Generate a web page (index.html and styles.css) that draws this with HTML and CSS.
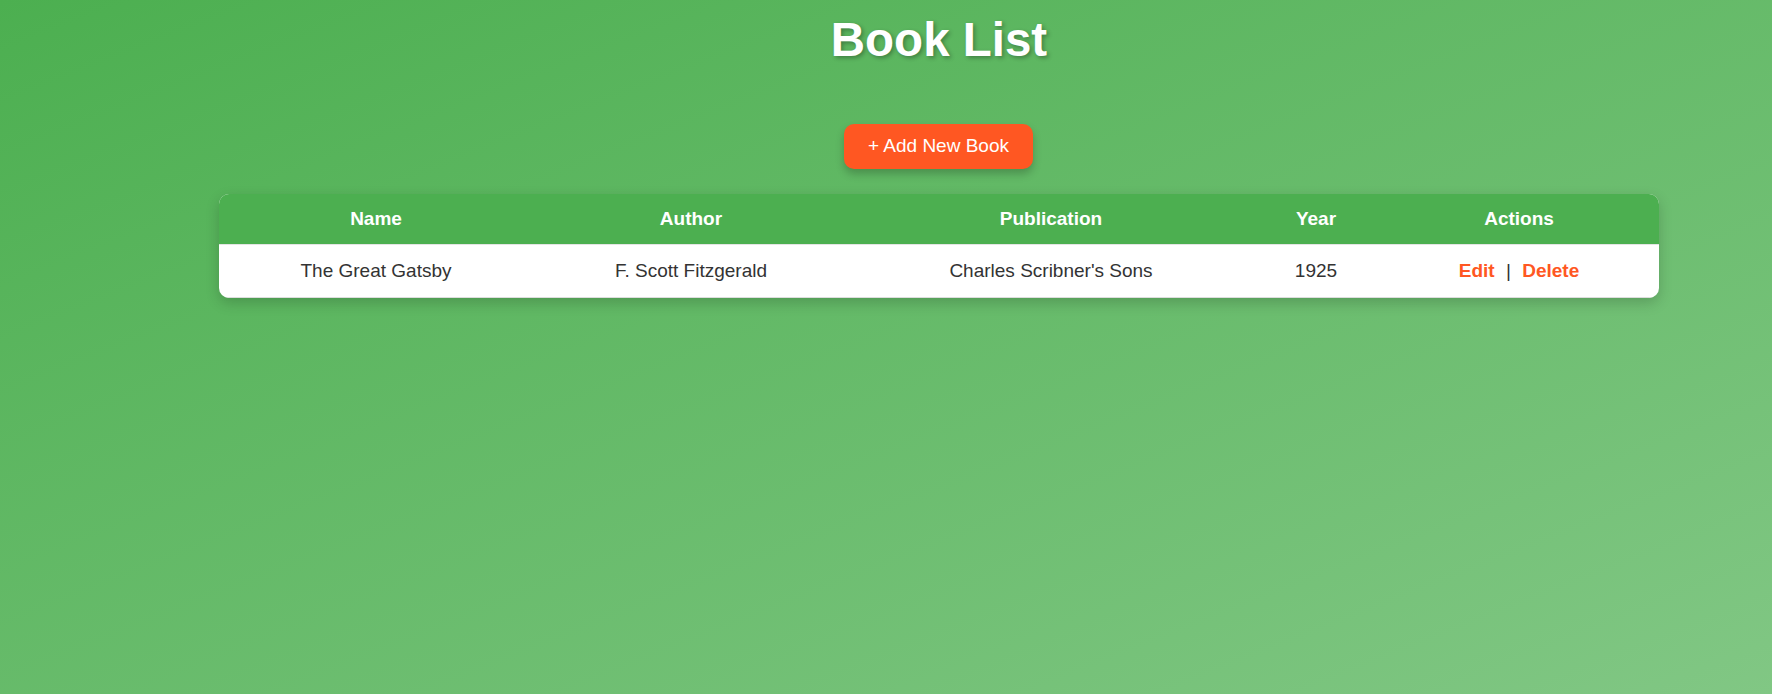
FILE: index.html
```html
<!DOCTYPE html>
<html lang="en">
<head>
<meta charset="utf-8">
<title>Book List</title>
<link rel="stylesheet" href="styles.css">
</head>
<body>
<main class="page">
  <h1 class="title">Book List</h1>
  <div class="toolbar">
    <button class="add-btn" type="button">+ Add New Book</button>
  </div>
  <div class="card">
    <table class="books">
      <colgroup>
        <col class="c-name">
        <col class="c-author">
        <col class="c-pub">
        <col class="c-year">
        <col class="c-actions">
      </colgroup>
      <thead>
        <tr>
          <th>Name</th>
          <th>Author</th>
          <th>Publication</th>
          <th>Year</th>
          <th>Actions</th>
        </tr>
      </thead>
      <tbody>
        <tr>
          <td>The Great Gatsby</td>
          <td>F. Scott Fitzgerald</td>
          <td>Charles Scribner's Sons</td>
          <td>1925</td>
          <td><a class="act" href="#">Edit</a> | <a class="act" href="#">Delete</a></td>
        </tr>
      </tbody>
    </table>
  </div>
</main>
</body>
</html>
```

FILE: styles.css
```css
html {
  min-height: 100%;
  background: linear-gradient(to bottom right, #4CAF50 0%, #81C784 100%);
}
body {
  margin: 0;
  min-height: 694px;
  font-family: "Liberation Sans", Arial, sans-serif;
  font-size: 19px;
  color: #333;
}
.page {
  width: 1440px;
  margin-left: 219px;
  padding-top: 13px;
  text-align: center;
}
.title {
  margin: 0;
  font-size: 47.5px;
  line-height: 54px;
  font-weight: bold;
  color: #fff;
  text-shadow: 2px 2px 4px rgba(0, 0, 0, 0.3);
}
.toolbar {
  margin-top: 57px;
  display: flex;
  justify-content: center;
}
.add-btn {
  font-family: inherit;
  font-size: 19px;
  line-height: 22px;
  padding: 11px 24px 12px;
  margin-left: -1px;
  border: none;
  border-radius: 10px;
  background: #FF5722;
  color: #fff;
  box-shadow: 0 5px 8px rgba(0, 0, 0, 0.22);
  cursor: pointer;
}
.card {
  margin-top: 25px;
  border-radius: 10px;
  overflow: hidden;
  background: #fff;
  box-shadow: 0 5px 14px rgba(0, 0, 0, 0.18);
}
.books {
  width: 100%;
  border-collapse: collapse;
  table-layout: fixed;
}
.c-name { width: 314px; }
.c-author { width: 316px; }
.c-pub { width: 404px; }
.c-year { width: 126px; }
.c-actions { width: 280px; }
.books th {
  background: #4CAF50;
  color: #fff;
  font-weight: bold;
  padding: 14px 10px;
  line-height: 22px;
  border-bottom: 1px solid #e4e4e4;
}
.books td {
  padding: 14px 10px 15px;
  line-height: 23px;
  border-bottom: 1px solid #ddd;
  color: #333;
}
.act {
  color: #FF5722;
  font-weight: bold;
  text-decoration: none;
  margin: 0 6px;
}
```
